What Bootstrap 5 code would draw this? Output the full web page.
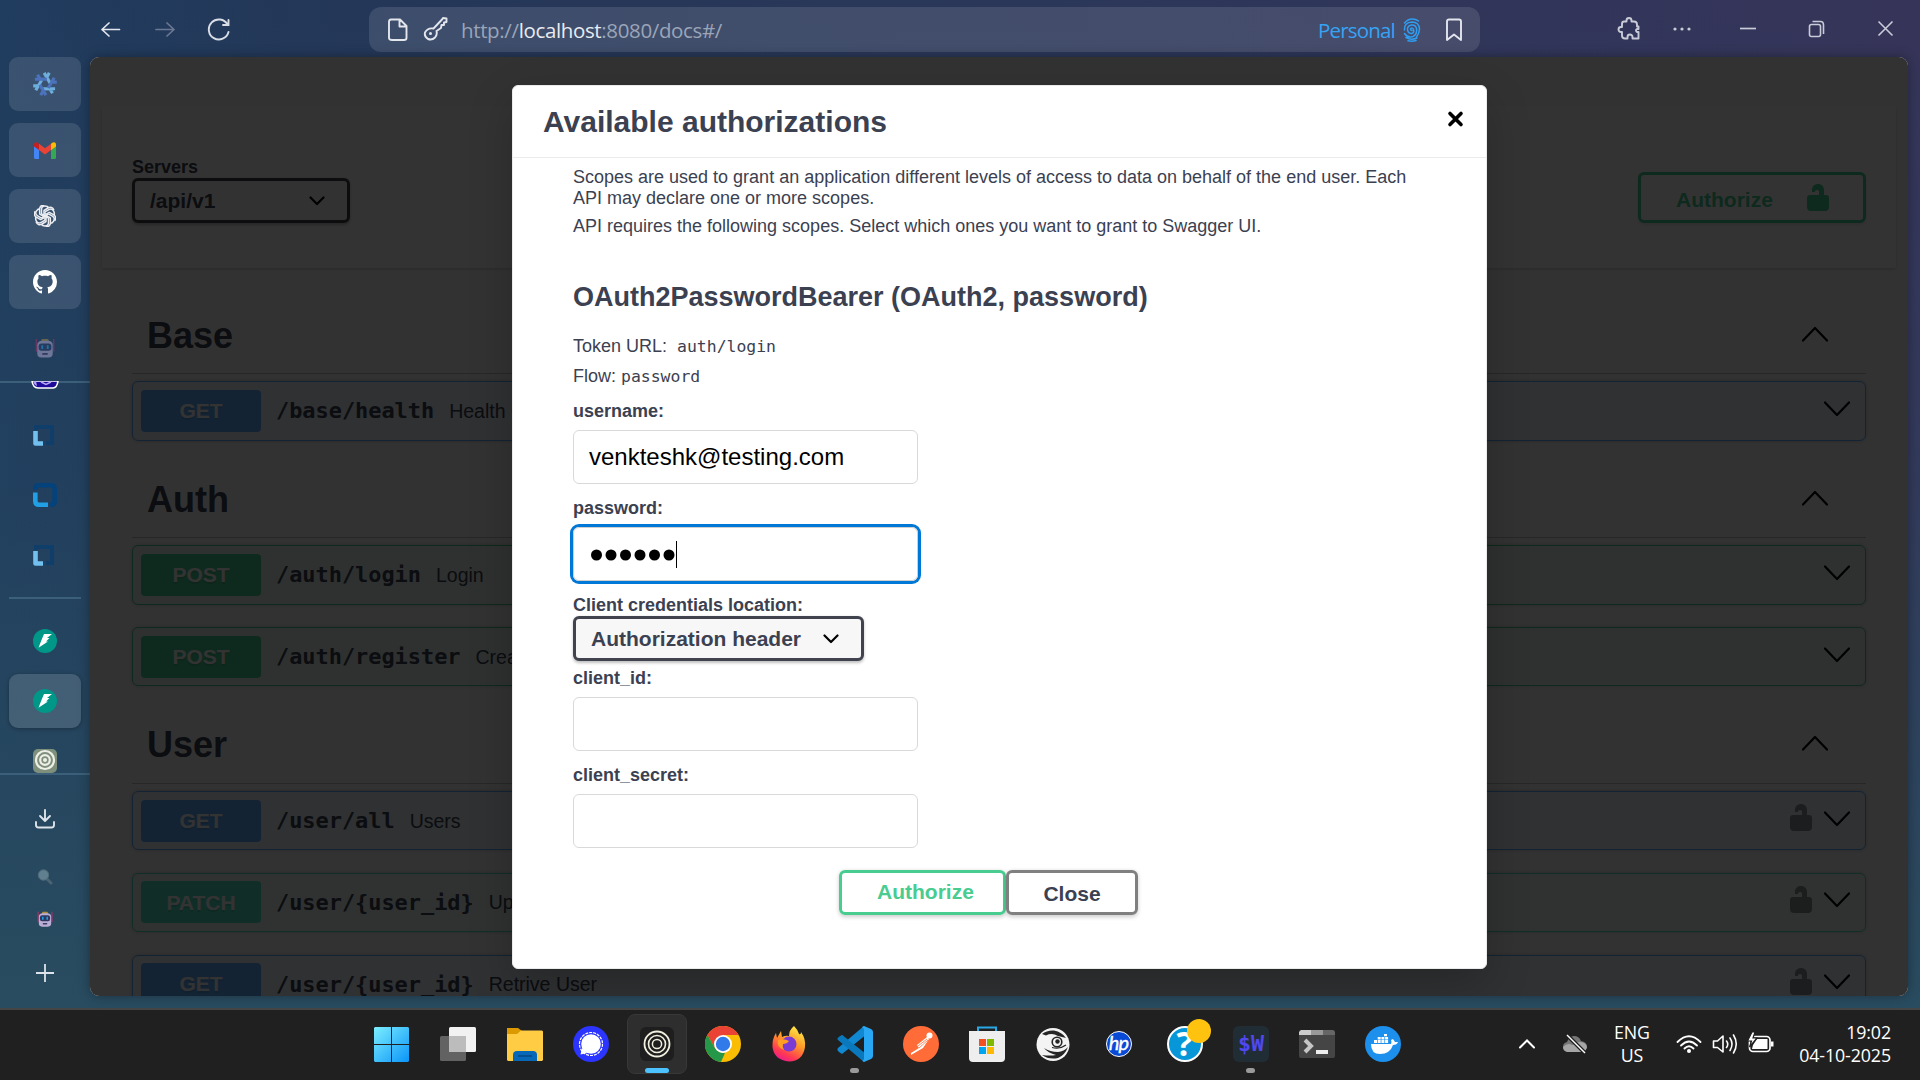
<!DOCTYPE html>
<html lang="en" data-bs-theme="light">
<head>
<meta charset="utf-8">
<title>Swagger UI</title>
<link rel="stylesheet" href="https://cdn.jsdelivr.net/npm/bootstrap@5.3.0/dist/css/bootstrap.min.css">
<style>
html,body{height:100%;overflow:hidden}
body{margin:0;color:#3b4151;font-family:"Liberation Sans",Arial,sans-serif;
 background:linear-gradient(180deg,rgba(39,77,96,0) 0,rgba(39,77,96,.25) 45%,#294c60 93%),linear-gradient(90deg,#203c5e 0,#243758 18%,#2b3759 55%,#363459 100%)}
svg{display:block;flex:none}
.desk{width:1920px;height:1080px}
/* browser toolbar */
.topbar{height:57px;padding:0 0 0 99px;font-family:"Open Sans","Noto Sans",sans-serif;color:#d9dde6}
.urlbar{width:1111px;height:45px;margin:7px 0 5px 138px;border-radius:12px;background:rgba(255,255,255,.115);padding:0 16px 0 17px}
.urltext{font-size:20.5px;letter-spacing:-.36px;color:#9ba5b8;margin-left:13px;line-height:45px;padding-top:2px}
.urltext span{color:#e8ebf0}
.personal{color:#36a3f5;font-size:20.5px;letter-spacing:-.8px;padding-top:2px}
.fwd{margin-left:33px}.reload{margin-left:31px}.key{margin-left:13px}
/* sidebar */
.rail{width:90px;height:951px}
.tile{width:72px;height:54px;border-radius:9px;background:rgba(255,255,255,.115);margin-bottom:12px}
.tile.active{background:rgba(255,255,255,.14);box-shadow:0 1px 4px rgba(0,0,0,.3);margin:21px 0 21px}
.rule{height:2px;background:#3c6079}
.slot{width:90px}
/* page */
.page{width:1818px;height:939px;border-radius:9px;background:#fafafa;overflow:hidden;box-shadow:0 0 12px rgba(0,0,0,.35)}
.servers{margin:49px 12px 0;height:162px;background:#fff;box-shadow:0 1.5px 3px rgba(0,0,0,.15);padding:6px 30px 0 30px}
.lbl{font-size:18px;font-weight:700;line-height:21px}
.pick{height:45px;border:3px solid #41444e;border-radius:6px;background:#f7f7f7;box-shadow:0 1.5px 3px rgba(0,0,0,.25);font-size:21px;font-weight:700;padding:0 22px 0 15px;color:#3b4151}
.authbtn{width:228px;height:51px;border:3px solid #49cc90;border-radius:6px;color:#49cc90;font-weight:700;font-size:21px;padding:0 34px 0 35px;box-shadow:0 1.5px 3px rgba(0,0,0,.1)}
.authbtn span{padding-top:4px}
.api{margin:31px 42px 0}
.taghead{height:75px;border-bottom:1px solid rgba(59,65,81,.3);font-size:36px;font-weight:700;padding:0 38px 1px 15px;margin-bottom:7.25px}
.taghead svg{margin-bottom:4px}
.op{height:59.25px;margin-bottom:22.5px;border:1px solid;border-radius:6px;box-shadow:0 0 4.5px rgba(0,0,0,.19);padding:0 15px 0 8px}
.op svg{margin-bottom:4px}
.op .verb{width:120px;height:42px;border-radius:4px;color:#fff;font-weight:700;font-size:21px;text-shadow:0 1.5px 0 rgba(0,0,0,.1)}
.op .path{font:700 21.9px/30px "DejaVu Sans Mono",monospace;margin-left:15px;padding-top:1px}
.op .desc{font-size:19.5px;margin-left:15px;padding-top:1px}
.padlock{opacity:.4;color:#000;margin-right:12px}
.op .padlock{margin-bottom:6px}
.get{border-color:#61affe;background:rgba(97,175,254,.1)}.get .verb{background:#61affe}
.post{border-color:#49cc90;background:rgba(73,204,144,.1)}.post .verb{background:#49cc90}
.patch{border-color:#50e3c2;background:rgba(80,227,194,.1)}.patch .verb{background:#50e3c2}
/* dialog */
.veil{inset:0;background:rgba(0,0,0,.8);padding:28px 0 0 1px}
.dlg{width:975px;height:883.5px;background:#fff;border:1px solid #ebebeb;border-radius:6px;box-shadow:0 15px 45px rgba(0,0,0,.2)}
.dlghead{height:72px;border-bottom:1px solid #ebebeb;padding:0 22px 0 30px;font-size:30px;font-weight:600}
.dlgbody{padding:9px 59px 0 60px;font-size:18px;line-height:21px}
.dlgbody p{margin:0 0 7px}
.dlgbody h4{font-size:27px;line-height:32px;font-weight:700;margin:44px 0 22.5px}
.dlgbody code{font:16.45px/21px "DejaVu Sans Mono",monospace;color:#3b4151}
.dlgbody .token{margin-bottom:9px}.dlgbody .flow{margin-bottom:14.5px}
.field{width:345px;height:54px;border:1px solid #d9d9d9;border-radius:6px;font-size:24px;color:#000;padding:0 15px;margin:8px 0 14px}
.typed{padding-bottom:2px}
.field.focused{box-shadow:0 0 0 3px #0078d7;border-color:#d0cfcf;padding-left:16px}
.focused svg{margin-top:2px}
.caret{width:1px;height:27px;background:#000}
.act{height:45px;border:3px solid #49cc90;border-radius:6px;font-size:21px;font-weight:700;box-shadow:0 1.5px 4px rgba(0,0,0,.2)}
.act.ok{width:167px;color:#49cc90;padding:0 0 3px 35px}
.act.cancel{width:132px;border-color:gray;padding-top:1px}
.actions{margin:22px 0 0 266px}
/* taskbar */
.taskbar{height:72px;background:#202020;border-top:2px solid #454545;color:#fff;font-family:"Open Sans","Noto Sans",sans-serif;padding-left:358px}
.app{width:66px;height:70px;position:relative;padding-bottom:2px}
.app.wide{width:67px;padding-left:1px}
.app.on::before{content:"";position:absolute;inset:4px 3px 6px;border-radius:8px;background:#2e2e2e;border:1px solid #383838}
.app.on svg{position:relative}
.pip{position:absolute;bottom:7px;left:28px;width:9px;height:5px;border-radius:3px;background:#9a9a9a}
.app.on .pip{left:21px;width:24px;background:#4cc2ff}
.note{position:absolute;width:24px;height:24px;border-radius:50%;background:#ffc20e;left:35px;top:9px}
.tray{margin:0 0 2px 103px;font-size:17.8px;line-height:23.5px;letter-spacing:-.1px}
</style>
<script src="https://cdn.jsdelivr.net/npm/bootstrap@5.3.0/dist/js/bootstrap.bundle.min.js"></script>
</head>
<body>
<svg width="0" height="0" class="position-absolute">
 <defs>
  <symbol id="down" viewBox="0 0 26 16"><path d="M1 1.500 13 14 25 1.500" fill="none" stroke="#000" stroke-width="2.200" stroke-linecap="round" stroke-linejoin="round"/></symbol>
  <symbol id="up" viewBox="0 0 26 16"><path d="M1 14.500 13 2 25 14.500" fill="none" stroke="#000" stroke-width="2.200" stroke-linecap="round" stroke-linejoin="round"/></symbol>
  <symbol id="tick" viewBox="0 0 16 10"><path d="M1.500 1.500 8 8 14.500 1.500" fill="none" stroke="#000" stroke-width="2.200" stroke-linecap="round" stroke-linejoin="round"/></symbol>
  <symbol id="lock" viewBox="0 0 22 27"><path d="M3 11H12V7A2.500 2.500 0 0 0 8 7V8H5V6C5 2 8 0 11 0S17 2 17 6V11H19Q22 11 22 14V23Q22 27 18 27H4Q0 27 0 23V14Q0 11 3 11Z" fill="currentColor"/></symbol>
  <symbol id="fast" viewBox="0 0 24 24"><circle cx="12" cy="12" r="12" fill="#009688"/><path d="M11 5H19L14 9H16.500L13 12.600H15L5.500 18.800 8.500 11Z" fill="#fff"/></symbol>
  <symbol id="robot" viewBox="0 0 22 22"><path d="M1.500 1V15M20.500 1V15" stroke="#b02e68" stroke-width="1.600"/><rect x="7" y="1" width="8" height="4" rx="1.500" fill="#b08d3a"/><path d="M2.500 8Q2.500 3 8 3H14Q19.500 3 19.500 8V17Q19.500 21.500 15 21.500H7Q2.500 21.500 2.500 17Z" fill="#b9aed6"/><rect x="4" y="6" width="14" height="8" rx="3" fill="#30385f"/><path d="M8 8V12M14 8V12" stroke="#1ca7ec" stroke-width="2"/><path d="M8 17.500H14" stroke="#403b60" stroke-width="2"/></symbol>
  <symbol id="square" viewBox="0 0 24 24"><path d="M3 6V3H19V19H13" fill="none" stroke="#103e6b" stroke-width="4"/><path d="M2.500 7V19.500H10" fill="none" stroke="#72c0f0" stroke-width="4.600" stroke-linejoin="round"/></symbol>
 </defs>
</svg>
<div class="desk d-flex flex-column">
 <header class="topbar d-flex align-items-center">
  <svg width="22" height="22" viewBox="0 0 22 22" fill="none" stroke="#e3e6ed" stroke-width="1.700" stroke-linecap="round" stroke-linejoin="round"><path d="M20.500 11.500H3M10 5 3 11.500 10 18"/></svg>
  <svg class="fwd" width="22" height="22" viewBox="0 0 22 22" fill="none" stroke="#6b7893" stroke-width="1.700" stroke-linecap="round" stroke-linejoin="round"><path d="M2 11.500H20M13 5 20 11.500 13 18"/></svg>
  <svg class="reload" width="24" height="24" viewBox="0 0 24 24" fill="none" stroke="#d9dde6" stroke-width="1.900" stroke-linecap="round"><path d="M21.500 15A10 10 0 1 1 20.500 7.500M21.500 3V8H16"/></svg>
  <div class="urlbar d-flex align-items-center">
   <svg width="24" height="24" viewBox="0 0 24 24" fill="none" stroke="#e3e6ed" stroke-width="1.900" stroke-linejoin="round"><path d="M5 1.500H14L20.500 8V20Q20.500 22 18 22H6Q3 22 3 20V4Q3 1.500 5 1.500ZM13.500 1.500V8.500H20.500"/></svg>
   <svg class="key" width="25" height="25" viewBox="0 0 25 25" fill="none" stroke="#e3e6ed" stroke-width="1.900" stroke-linejoin="round"><path d="M10.500 11.500 19 2.500 20 1 23.500 1.500V5L21 5.500V8H18.500L18 11 13.500 14Q14.500 17.500 12 20.500 9 23.500 5 22 1 19.500 2 15.500 4.500 10.500 10.500 11.500Z"/><circle cx="7.500" cy="16.500" r="1.500" fill="#e3e6ed" stroke="none"/></svg>
   <div class="urltext">http://<span>localhost</span>:8080/docs#/</div>
   <span class="personal ms-auto">Personal</span>
   <svg style="margin-left:8px" width="18" height="24" viewBox="0 0 18 24" fill="none" stroke="#2f9df0" stroke-width="1.500" stroke-linecap="round"><path d="M1.500 5Q5 1 9 1 13 1 15.500 3M1.500 12Q1 4.500 9 4 16 4 16.500 11 16.500 15 13.500 19M1.500 15.500Q5 20.500 10 18.500 14.500 16 13.500 10.500 12.500 6.500 8.500 7 4 8 4.500 12 5.500 16 9 15.500 11.500 14.500 10.500 11.500 9.500 9 7.500 11 7.500 12.500 9 12.500M3 19.500Q8 22.500 14 20M5 22.800Q9 23.800 13 22.500"/></svg>
   <svg style="margin-left:23px" width="20" height="24" viewBox="0 0 20 24" fill="none" stroke="#e3e6ed" stroke-width="1.900" stroke-linejoin="round"><path d="M3 22V3.500Q3 1.500 5 1.500H15Q17 1.500 17 3.500V22L10 16.500Z"/></svg>
  </div>
  <svg style="margin-left:137px" width="24" height="24" viewBox="0 0 24 24" fill="none" stroke="#c9cbd8" stroke-width="1.900" stroke-linejoin="round"><path d="M7 4.500H9.500V3.500A2.500 2.500 0 0 1 14.500 3.500V4.500H17Q20 4.500 20 7.500V9.500H21.500V12H20Q18 13.500 20 15H21.500V21.500H15.500V20A2.500 2.500 0 0 0 10.500 20V21.500H8Q5 21.500 5 18.500V15H4A2.500 2.500 0 0 1 4 10H5V7Q5 4.500 7 4.500Z"/></svg>
  <svg style="margin-left:31px" width="20" height="6" viewBox="0 0 20 6" fill="#c9cbd8"><circle cx="3" cy="3" r="1.600"/><circle cx="10" cy="3" r="1.600"/><circle cx="17" cy="3" r="1.600"/></svg>
  <svg style="margin-left:47px" width="18" height="18" viewBox="0 0 18 18" stroke="#c9cbd8" stroke-width="1.700"><path d="M1 8.500H17"/></svg>
  <svg style="margin-left:51px" width="18" height="18" viewBox="0 0 18 18" fill="none" stroke="#c9cbd8" stroke-width="1.600"><rect x="1.500" y="4.500" width="11" height="12" rx="2"/><path d="M4.500 1.500H12.500Q15.500 1.500 15.500 5V14"/></svg>
  <svg style="margin-left:51px" width="18" height="18" viewBox="0 0 18 18" stroke="#c9cbd8" stroke-width="1.600"><path d="M1.500 1.500 15.500 15.500M15.500 1.500 1.500 15.500"/></svg>
 </header>

 <div class="d-flex">
  <nav class="rail d-flex flex-column align-items-center">
   <div class="tile d-flex align-items-center justify-content-center"><svg width="26" height="24" viewBox="-15 -14 30 28" fill="none" stroke-width="3.600"><g stroke="#6eaedc"><path d="M-1-13 6-1M5-13 2-7.500"/><path d="M-1-13 6-1M5-13 2-7.500" transform="rotate(120)"/><path d="M-1-13 6-1M5-13 2-7.500" transform="rotate(240)"/></g><g stroke="#4d72bd"><path d="M-1-13 6-1M5-13 2-7.500" transform="rotate(60)"/><path d="M-1-13 6-1M5-13 2-7.500" transform="rotate(180)"/><path d="M-1-13 6-1M5-13 2-7.500" transform="rotate(300)"/></g></svg></div>
   <div class="tile d-flex align-items-center justify-content-center"><svg width="22" height="17" viewBox="0 0 22 17"><path d="M0 4H5V17H1.500Q0 17 0 15.500Z" fill="#4285f4"/><path d="M17 4H22V15.500Q22 17 20.500 17H17Z" fill="#34a853"/><path d="M5 2V8L0 4.500V3Q0-1 4 .700Z" fill="#c5221f"/><path d="M17 2V8L22 4.500V3Q22-1 18 .700Z" fill="#fbbc04"/><path d="M5 1.700 11 6.300 17 1.700V8L11 12.500 5 8Z" fill="#ea4335"/></svg></div>
   <div class="tile d-flex align-items-center justify-content-center"><svg width="22" height="22" viewBox="-11 -11 22 22" fill="none" stroke="#eceef2" stroke-width="1.500" stroke-linejoin="round"><g id="petal"><path d="M-3.500-2V-6.500Q-3.500-10 0-10 2.500-10 4-8M-3.500-2 0 0M-1-1.500V-5.500L3-8Q7-10 9-6"/></g><use href="#petal" transform="rotate(60)"/><use href="#petal" transform="rotate(120)"/><use href="#petal" transform="rotate(180)"/><use href="#petal" transform="rotate(240)"/><use href="#petal" transform="rotate(300)"/></svg></div>
   <div class="tile d-flex align-items-center justify-content-center"><svg width="24" height="24" viewBox="0 0 16 16" fill="#fff"><path d="M8 0C3.580 0 0 3.580 0 8c0 3.540 2.290 6.530 5.470 7.590.4.070.55-.17.55-.38 0-.19-.01-.82-.01-1.490-2.010.37-2.530-.49-2.690-.94-.09-.23-.48-.94-.82-1.130-.28-.15-.68-.52-.01-.53.63-.01 1.080.58 1.230.82.72 1.210 1.870.87 2.330.66.07-.52.28-.87.51-1.070-1.780-.2-3.640-.89-3.640-3.950 0-.87.31-1.590.82-2.150-.08-.2-.36-1.020.08-2.120 0 0 .67-.21 2.200.82.64-.18 1.320-.27 2-.27s1.360.09 2 .27c1.530-1.040 2.200-.82 2.200-.82.44 1.100.16 1.920.08 2.120.51.56.82 1.270.82 2.150 0 3.070-1.870 3.750-3.650 3.950.29.25.54.73.54 1.480 0 1.070-.01 1.930-.01 2.200 0 .21.15.46.55.38A8.010 8.010 0 0 0 16 8c0-4.420-3.580-8-8-8Z"/></svg></div>
   <div class="slot d-flex justify-content-center opacity-50" style="height:60px;padding-top:16px"><svg width="20" height="22" viewBox="0 0 22 22"><use href="#robot"/></svg></div>
   <div class="slot d-flex justify-content-center" style="height:8px;background:linear-gradient(#3c6079 2px,transparent 2px)"><svg width="28" height="8" viewBox="0 0 28 8"><path d="M1 0H27Q26 7 22 7H7Q2 7 1 0Z" fill="#1d0a9b" stroke="#fff" stroke-width="1.600"/><path d="M2 0H5L6 5Q3 4 2 0" fill="#b7a4f3"/><path d="M10 1 15 3.500 20 1" stroke="#b7a4f3" stroke-width="1.500" fill="none"/></svg></div>
   <svg style="margin-top:35px" width="24" height="24"><use href="#square"/></svg>
   <svg style="margin-top:35px" width="24" height="24" viewBox="0 0 24 24" fill="none" stroke-width="4.600"><path d="M2.300 7V6Q2.300 2.300 6 2.300H18Q21.700 2.300 21.700 6V18Q21.700 21.700 18 21.700H17" stroke="#04427b"/><path d="M2.300 9.500V18Q2.300 21.700 6 21.700H15" stroke="#21a0e6"/></svg>
   <svg style="margin-top:37px" width="24" height="24"><use href="#square"/></svg>
   <div class="rule" style="width:72px;margin-top:29px"></div>
   <svg style="margin-top:30px" width="24" height="24"><use href="#fast"/></svg>
   <div class="tile active d-flex align-items-center justify-content-center"><svg width="24" height="24"><use href="#fast"/></svg></div>
   <svg width="24" height="24" viewBox="0 0 24 24"><rect width="24" height="24" rx="5" fill="#7e8f7c"/><g fill="none" stroke="#eef0e8" stroke-width="2.200"><circle cx="12" cy="11" r="9"/><circle cx="12" cy="11" r="4.800"/></g><circle cx="12" cy="11" r="2" fill="#eef0e8"/></svg>
   <div class="rule w-100"></div>
   <svg style="margin-top:34px" width="20" height="20" viewBox="0 0 20 20" fill="none" stroke="#dce3ea" stroke-width="1.900" stroke-linecap="round" stroke-linejoin="round"><path d="M10 1V11.500M5 7 10 12 15 7M1 13V16Q1 18.500 3.500 18.500H16.500Q19 18.500 19 16V13"/></svg>
   <svg style="margin-top:40px" width="16" height="16" viewBox="0 0 16 16"><path d="M9 9 14 14" stroke="#4b6473" stroke-width="3" stroke-linecap="round"/><circle cx="6.500" cy="6" r="5.200" fill="#60808f" stroke="#506b7a"/></svg>
   <svg style="margin-top:26px" width="16" height="16" viewBox="0 0 22 22"><use href="#robot"/></svg>
   <svg style="margin-top:36px" width="20" height="20" viewBox="0 0 20 20" stroke="#dce3ea" stroke-width="1.800"><path d="M10 1V19M1 10H19"/></svg>
  </nav>

  <main class="page position-relative">
   <section class="servers d-flex align-items-center justify-content-between">
    <div>
     <div class="lbl">Servers</div>
     <div class="pick d-flex align-items-center justify-content-between" style="width:218px">/api/v1 <svg width="16" height="10"><use href="#tick"/></svg></div>
    </div>
    <div class="authbtn d-flex align-items-center justify-content-between align-self-end" style="margin-bottom:45px"><span>Authorize</span><svg width="22" height="27"><use href="#lock"/></svg></div>
   </section>

   <section class="api">
    <div class="taghead d-flex align-items-center justify-content-between">Base <svg width="26" height="16"><use href="#up"/></svg></div>
    <div class="op get d-flex align-items-center"><div class="verb d-flex align-items-center justify-content-center">GET</div><div class="path">/base/health</div><div class="desc">Health Check</div><svg class="ms-auto" width="26" height="16"><use href="#down"/></svg></div>
    <div class="taghead d-flex align-items-center justify-content-between">Auth <svg width="26" height="16"><use href="#up"/></svg></div>
    <div class="op post d-flex align-items-center"><div class="verb d-flex align-items-center justify-content-center">POST</div><div class="path">/auth/login</div><div class="desc">Login</div><svg class="ms-auto" width="26" height="16"><use href="#down"/></svg></div>
    <div class="op post d-flex align-items-center"><div class="verb d-flex align-items-center justify-content-center">POST</div><div class="path">/auth/register</div><div class="desc">Create User</div><svg class="ms-auto" width="26" height="16"><use href="#down"/></svg></div>
    <div class="taghead d-flex align-items-center justify-content-between">User <svg width="26" height="16"><use href="#up"/></svg></div>
    <div class="op get d-flex align-items-center"><div class="verb d-flex align-items-center justify-content-center">GET</div><div class="path">/user/all</div><div class="desc">Users</div><svg class="ms-auto padlock" width="22" height="27"><use href="#lock"/></svg><svg width="26" height="16"><use href="#down"/></svg></div>
    <div class="op patch d-flex align-items-center"><div class="verb d-flex align-items-center justify-content-center">PATCH</div><div class="path">/user/{user_id}</div><div class="desc">Update User</div><svg class="ms-auto padlock" width="22" height="27"><use href="#lock"/></svg><svg width="26" height="16"><use href="#down"/></svg></div>
    <div class="op get d-flex align-items-center"><div class="verb d-flex align-items-center justify-content-center">GET</div><div class="path">/user/{user_id}</div><div class="desc">Retrive User</div><svg class="ms-auto padlock" width="22" height="27"><use href="#lock"/></svg><svg width="26" height="16"><use href="#down"/></svg></div>
   </section>

   <div class="veil position-absolute d-flex justify-content-center align-items-start">
    <div class="dlg">
     <div class="dlghead d-flex align-items-center justify-content-between">Available authorizations
      <svg width="17" height="18" viewBox="0 0 17 18" stroke="#000" stroke-width="3.600" stroke-linecap="round" style="margin-bottom:5px"><path d="M3 3.500 14 14.500M14 3.500 3 14.500"/></svg></div>
     <div class="dlgbody">
      <p>Scopes are used to grant an application different levels of access to data on behalf of the end user. Each<br>API may declare one or more scopes.</p>
      <p class="mb-0">API requires the following scopes. Select which ones you want to grant to Swagger UI.</p>
      <h4>OAuth2PasswordBearer (OAuth2, password)</h4>
      <p class="token">Token URL:&nbsp; <code>auth/login</code></p>
      <p class="flow">Flow: <code>password</code></p>
      <div class="lbl">username:</div>
      <div class="field typed d-flex align-items-center">venkteshk@testing.com</div>
      <div class="lbl">password:</div>
      <div class="field focused d-flex align-items-center">
       <svg width="86" height="12" viewBox="0 0 86 12"><circle cx="6.500" cy="6" r="5.500"/><circle cx="21" cy="6" r="5.500"/><circle cx="35.500" cy="6" r="5.500"/><circle cx="50" cy="6" r="5.500"/><circle cx="64.500" cy="6" r="5.500"/><circle cx="79" cy="6" r="5.500"/></svg><span class="caret"></span></div>
      <div class="lbl">Client credentials location:</div>
      <div class="pick d-flex align-items-center justify-content-between" style="width:291px;margin-bottom:7px">Authorization header <svg width="16" height="10"><use href="#tick"/></svg></div>
      <div class="lbl">client_id:</div>
      <div class="field"></div>
      <div class="lbl">client_secret:</div>
      <div class="field"></div>
      <div class="actions d-flex">
       <div class="act ok d-flex align-items-center">Authorize</div>
       <div class="act cancel d-flex align-items-center justify-content-center">Close</div>
      </div>
     </div>
    </div>
   </div>
  </main>
 </div>

 <footer class="taskbar d-flex align-items-center">
  <div class="app d-flex align-items-center justify-content-center"><svg width="35" height="35" viewBox="0 0 35 35"><defs><linearGradient id="w" x1="0" y1="0" x2="1" y2="1"><stop stop-color="#7ceeff"/><stop offset="1" stop-color="#0a94f8"/></linearGradient></defs><path d="M1 0H17V17H0V1ZM18 0H34L35 1V17H18ZM0 18H17V35H1L0 34ZM18 18H35V34L34 35H18Z" fill="url(#w)"/></svg></div>
  <div class="app wide d-flex align-items-center justify-content-center"><svg width="36" height="34" viewBox="0 0 36 34"><rect y="9" width="26" height="25" rx="1.500" fill="#626262"/><rect x="9" width="27" height="25" rx="1.500" fill="#f2f2f2"/><rect x="9" y="9" width="17" height="16" fill="#bcbcbc"/></svg></div>
  <div class="app wide d-flex align-items-center justify-content-center"><svg width="36" height="34" viewBox="0 0 36 34"><path d="M0 1H11L15 4V9H0Z" fill="#dc9900"/><path d="M0 7H10L14 3.500H35L36 4.500V33L35 34H1L0 33Z" fill="#ffcc43"/><path d="M6 34V28Q6 24 10 24H26Q30 24 30 28V34Z" fill="#0868b8"/><path d="M11 29H25" stroke="#034783" stroke-width="1.500"/></svg></div>
  <div class="app d-flex align-items-center justify-content-center"><svg width="36" height="36" viewBox="0 0 36 36"><circle cx="18" cy="18" r="18" fill="#2c35ff"/><circle cx="18" cy="18" r="11.500" fill="none" stroke="#fff" stroke-width="1.200" stroke-dasharray="3 1"/><path d="M9 22 7.500 28.500 14 27Z" fill="#fff"/><circle cx="18" cy="18" r="9.800" fill="#fff"/></svg></div>
  <div class="app on d-flex align-items-center justify-content-center"><svg width="34" height="34" viewBox="0 0 34 34"><rect width="34" height="34" rx="6" fill="#1e1e1e"/><g fill="none" stroke="#f1efdf"><circle cx="17" cy="17" r="12.500" stroke-width="1.800"/><circle cx="17" cy="17" r="8.500" stroke-width="1.600"/><circle cx="17" cy="17" r="4.600" stroke-width="1.500"/></g></svg><i class="pip"></i></div>
  <div class="app d-flex align-items-center justify-content-center"><svg width="36" height="36" viewBox="0 0 36 36"><circle cx="18" cy="18" r="18" fill="#fbbc04"/><path d="M18 18 10.200 22.500 2.400 9A18 18 0 0 1 33.600 9H18Z" fill="#ea4335"/><path d="M2.400 9 10.200 22.500Q14 27 20 27L18 36A18 18 0 0 1 2.400 9Z" fill="#249848"/><path d="M25.800 22.500 18 36H16L20 27Z" fill="#fbbc04"/><circle cx="18" cy="18" r="9" fill="#fff"/><circle cx="18" cy="18" r="7.200" fill="#307ae9"/></svg></div>
  <div class="app d-flex align-items-center justify-content-center"><svg width="34" height="36" viewBox="0 0 34 36"><defs><linearGradient id="ff" x1=".8" y1="0" x2=".3" y2="1"><stop stop-color="#fff14a"/><stop offset=".45" stop-color="#ff9727"/><stop offset=".8" stop-color="#ff3853"/><stop offset="1" stop-color="#e91b92"/></linearGradient></defs><path d="M22 0Q26 4 27 8 29 9 29 6 34 13 33 21 31 35 17 35.500 2 34 .5 21 0 13 4 7L5 12 9 5 10 11Q14 9 17 10 17 4 22 0Z" fill="url(#ff)"/><circle cx="17" cy="18" r="7.500" fill="#7a3ad3"/><path d="M6 14Q12 12 17 15 15 18 11 18 10 21 12 24 4 21 6 14Z" fill="#ff9d24"/></svg></div>
  <div class="app d-flex align-items-center justify-content-center"><svg width="36" height="36" viewBox="0 0 36 36"><path d="M2 11 5 9 29 28 27 36Z" fill="#0879bd"/><path d="M2 26 5 28 30 8 27 0 1 22Q-.5 24 2 26Z" fill="#1089d2"/><path d="M1 14Q-.5 12 2 11L5 9 27 27V36Z" fill="#0a78bc"/><path d="M27 0 34 3Q36 4 36 6V30Q36 32 34 33L27 36 25.500 35 27 33V3L25 1Z" fill="#2aa7f2"/></svg><i class="pip"></i></div>
  <div class="app d-flex align-items-center justify-content-center"><svg width="36" height="36" viewBox="0 0 36 36"><circle cx="18" cy="18" r="18" fill="#ff6c37"/><circle cx="26.500" cy="9.500" r="3" fill="#fff"/><path d="M24 11 14 19 16 22 8 27V29L20 22 26 13Z" fill="#fff"/><path d="M15 20 24 13M16 22 25 14" stroke="#ff6c37" stroke-width=".8"/></svg></div>
  <div class="app d-flex align-items-center justify-content-center"><svg width="36" height="36" viewBox="0 0 36 36"><path d="M9 8V1.500H27V8" fill="none" stroke="#29a8e8" stroke-width="2"/><path d="M0 5H36V32Q36 36 32 36H4Q0 36 0 32Z" fill="#eee"/><path d="M10 13H17V20H10Z" fill="#f25022"/><path d="M18 13H25V20H18Z" fill="#7fba00"/><path d="M10 21H17V28H10Z" fill="#00a4ef"/><path d="M18 21H25V28H18Z" fill="#ffb900"/></svg></div>
  <div class="app d-flex align-items-center justify-content-center"><svg width="34" height="35" viewBox="0 0 34 35"><circle cx="17" cy="17.500" r="16.500" fill="#f4f4f4"/><path d="M6 7Q11 3 18 3.500 26 5 30 11L22 9Q16 5.500 10 8.500Z" fill="#252525"/><path d="M8 21Q14 25 22 25 28 24.500 32 20 29 28 22 31 13 33 6 28 14 29 20 28 12 26 8 21Z" fill="#252525"/><circle cx="21" cy="15" r="4.800" fill="#f4f4f4" stroke="#252525" stroke-width="1.600"/><circle cx="21.500" cy="14.500" r="2.200" fill="#252525"/><path d="M16 20.500Q24 22.500 30 18" stroke="#252525" stroke-width="1.200" fill="none"/></svg></div>
  <div class="app d-flex align-items-center justify-content-center"><svg width="26" height="26" viewBox="0 0 26 26"><circle cx="13" cy="13" r="12.500" fill="#0849d6" stroke="#fff"/><text x="12.500" y="18.500" text-anchor="middle" font-family="Lato" font-weight="400" font-style="italic" font-size="20" letter-spacing="-.8" fill="#fff" stroke="#fff" stroke-width=".4">hp</text></svg></div>
  <div class="app d-flex align-items-center justify-content-center"><svg class="overflow-visible" width="36" height="36" viewBox="0 0 36 36"><circle cx="18" cy="18" r="17" fill="#0796d8" stroke="#fff" stroke-width="2"/><text x="17.500" y="30" text-anchor="middle" font-family="Open Sans" font-weight="700" font-size="34" fill="#fff">?</text></svg><i class="note"></i></div>
  <div class="app d-flex align-items-center justify-content-center"><svg width="36" height="36" viewBox="0 0 36 36"><rect width="36" height="36" rx="6" fill="#202d35"/><text x="18" y="25" text-anchor="middle" font-family="DejaVu Sans Mono" font-weight="700" font-size="21" fill="#5148ed" textLength="26" lengthAdjust="spacingAndGlyphs">$W</text></svg><i class="pip"></i></div>
  <div class="app d-flex align-items-center justify-content-center"><svg width="36" height="28" viewBox="0 0 36 28"><rect width="36" height="28" rx="2" fill="#454545"/><path d="M0 5V2L2 0H12V5Z" fill="#ccc"/><path d="M12 0H24V5H12Z" fill="#999"/><path d="M24 0H34L36 2V5H24Z" fill="#666"/><path d="M6 10 12 16 6 22" fill="none" stroke="#c5c5c5" stroke-width="4"/><path d="M17 20H29V24H17Z" fill="#eee"/></svg></div>
  <div class="app d-flex align-items-center justify-content-center"><svg width="36" height="36" viewBox="0 0 36 36"><circle cx="18" cy="18" r="18" fill="#1d90ed"/><path d="M6 18H26Q27 16 26 14L28 13 30 16H33Q32 19 28 19 25 28 15 28 6 28 6 18Z" fill="#fff"/><path d="M9 14H12V17H9ZM12.700 14H15.700V17H12.700ZM16.400 14H19.400V17H16.400ZM20.100 14H23.100V17H20.100ZM12.700 11H15.700V13.400H12.700ZM16.400 11H19.400V13.400H16.400ZM20.100 11H23.100V13.400H20.100ZM19 8H22V10.300H19Z" fill="#fff"/></svg></div>
  <div class="tray d-flex align-items-center">
   <svg width="16" height="10" viewBox="0 0 16 10" fill="none" stroke="#fff" stroke-width="2" stroke-linecap="round"><path d="M1 8.500 8 1.500 15 8.500"/></svg>
   <svg style="margin-left:27px" width="26" height="20" viewBox="0 0 26 20"><path d="M5 17Q1 16 1 12.500 1 9 5 8 7 2 12 2 17 2 19 7 25 8 25 13 24 17 20 17Z" fill="#777"/><path d="M1 13Q6 8 10 11L17 8Q24 8 25 13 24 18 20 18H5Q1 17 1 13Z" fill="#a6a6a6"/><path d="M5 1 23 19" stroke="#202020" stroke-width="4"/><path d="M5 1 23 19" stroke="#fff" stroke-width="1.500"/></svg>
   <div class="text-center" style="width:38px;margin-left:25px">ENG<br>US</div>
   <svg style="margin-left:25px" width="26" height="20" viewBox="0 0 26 20" fill="none" stroke="#fff" stroke-width="1.800" stroke-linecap="round"><path d="M1.500 8Q13-3.500 24.500 8M5 11.500Q13 3.500 21 11.500M8.500 14.500Q13 10 17.500 14.500"/><circle cx="13" cy="17" r="2" fill="#fff" stroke="none"/></svg>
   <svg style="margin-left:10px" width="26" height="20" viewBox="0 0 26 20" fill="none" stroke="#fff" stroke-width="1.600" stroke-linecap="round" stroke-linejoin="round"><path d="M1.500 7H5.500L11 2V18L5.500 13.500H1.500ZM14.500 7Q17 10 14.500 13.500M18 4Q22 10 18 16.500M21.500 1Q27 10 21.500 19"/></svg>
   <svg class="overflow-visible" style="margin-left:10px" width="26" height="20" viewBox="0 0 26 20"><rect x="1.500" y="2.500" width="20.500" height="15" rx="3.500" fill="none" stroke="#fff" stroke-width="1.700"/><path d="M9 5H19.500V15H4L5 11Z" fill="#fff"/><path d="M23 7.500H25.500V12.500H23Z" fill="#fff"/><path d="M4-2-.5 7H3.500L1.500 13 9 4H5L7-2Z" fill="#fff" stroke="#202020" stroke-width="1.200"/></svg>
   <div class="text-end" style="width:100px;margin-left:17px">19:02<br>04-10-2025</div>
  </div>
 </footer>
</div>
</body>
</html>
